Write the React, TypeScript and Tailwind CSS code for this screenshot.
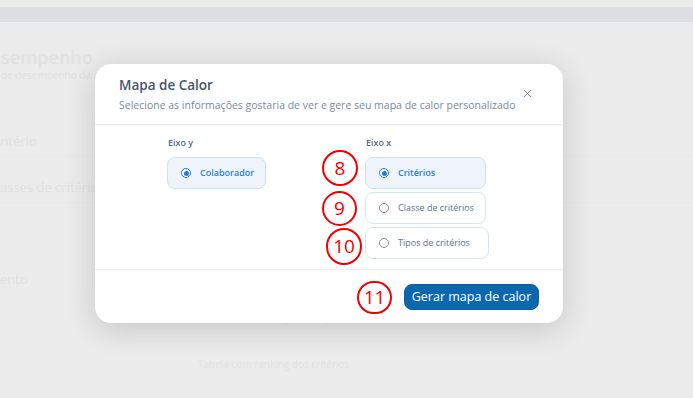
import { X } from "lucide-react"

const xOptions = [
  { id: "criterios", label: "Critérios", width: "w-[121px]" },
  { id: "classe", label: "Classe de critérios", width: "w-[121px]" },
  { id: "tipos", label: "Tipos de critérios", width: "w-[124px]" },
]

function Radio({ checked }: { checked: boolean }) {
  return checked ? (
    <span className="flex h-[10px] w-[10px] items-center justify-center rounded-full border-[1.5px] border-[#1f7ad1] bg-white">
      <span className="h-[5px] w-[5px] rounded-full bg-[#1f7ad1]" />
    </span>
  ) : (
    <span className="h-[10px] w-[10px] rounded-full border border-[#8c8f94] bg-white" />
  )
}

function Option({ label, checked, width }: { label: string; checked: boolean; width: string }) {
  return (
    <div
      className={`flex h-[32px] ${width} items-center gap-[9px] rounded-[8px] border pl-[13px] ${
        checked ? "border-[#cfe1f2] bg-[#eef4fa]" : "border-[#d6e5f3] bg-white"
      }`}
    >
      <Radio checked={checked} />
      <span
        className={`text-[9px] ${checked ? "font-semibold text-[#2b7fd1]" : "text-[#5e7290]"}`}
      >
        {label}
      </span>
    </div>
  )
}

function Marker({ n, className }: { n: string; className: string }) {
  return (
    <div
      className={`absolute flex items-center justify-center rounded-full border-[2.5px] border-[#f20000] bg-white text-[19px] leading-none text-[#f20000] ${className}`}
    >
      {n}
    </div>
  )
}

export default function App() {
  return (
    <div
      className="relative h-[398px] w-[693px] overflow-hidden bg-[#ebebeb]"
      style={{ fontFamily: '"Open Sans", "Noto Sans", sans-serif' }}
    >
      {/* page behind the overlay */}
      <div className="mt-[7px] h-[15px] bg-[#dcdee4]" />
      <div className="pl-[1px] pt-[24px] text-[#e2e2e2]">
        <div className="text-[18px] font-semibold leading-[22px]">sempenho</div>
        <div className="text-[10px] leading-[14px]">de desempenho da avaliação</div>
      </div>
      <div className="mt-[44px] text-[13px] text-[#e2e2e2]">
        <div className="h-[30px] leading-[30px]">ritério</div>
        <div className="h-px bg-[#e8e8e8]" />
        <div className="mt-[15px] h-[30px] leading-[30px]">asses de critérios</div>
        <div className="h-px bg-[#e8e8e8]" />
        <div className="mt-[61px] h-[30px] leading-[30px]">ento</div>
      </div>
      <div className="ml-[198px] mt-[16px] text-[10px] text-[#e3e3e3]">
        <div>Tabela com ranking por cargos</div>
        <div className="mt-[32px]">Tabela com ranking dos critérios</div>
      </div>

      {/* modal */}
      <div className="absolute left-[95px] top-[64px] w-[468px] rounded-[16px] bg-white shadow-[0_6px_30px_rgba(0,0,0,0.16)]">
        <div className="relative border-b border-[#e8ecf1] px-[24px] pb-[11px] pt-[11px]">
          <div className="text-[13.5px] font-semibold leading-[20px] text-[#4b5566]">Mapa de Calor</div>
          <div className="mt-[2px] text-[10.5px] leading-[16px] text-[#7c8aa0]">
            Selecione as informações gostaria de ver e gere seu mapa de calor personalizado
          </div>
          <X className="absolute right-[29px] top-[23px] h-[13px] w-[13px] text-[#707070]" strokeWidth={1.5} />
        </div>

        <div className="flex border-b border-[#eef0f3] pb-[10px] pt-[11px]">
          <div className="ml-[72px] w-[198px]">
            <div className="pl-[1px] text-[9px] font-semibold leading-[14px] text-[#5b6a7f]">Eixo y</div>
            <div className="mt-[7px]">
              <Option label="Colaborador" checked width="w-[99px]" />
            </div>
          </div>
          <div>
            <div className="pl-[1px] text-[9px] font-semibold leading-[14px] text-[#5b6a7f]">Eixo x</div>
            <div className="mt-[7px] flex flex-col gap-[3px]">
              {xOptions.map((o, i) => (
                <Option key={o.id} label={o.label} checked={i === 0} width={o.width} />
              ))}
            </div>
          </div>
        </div>

        <div className="flex justify-end px-[24px] pb-[13px] pt-[14px]">
          <button className="h-[26px] w-[135px] rounded-[8px] border border-[#0a5f9e] bg-[#0b68ae] text-[12.5px] text-white">
            Gerar mapa de calor
          </button>
        </div>
      </div>

      {/* annotations */}
      <Marker n="8" className="left-[322px] top-[150px] h-[36px] w-[36px]" />
      <Marker n="9" className="left-[322px] top-[191px] h-[35px] w-[35px]" />
      <Marker n="10" className="left-[326px] top-[228px] h-[37px] w-[36px]" />
      <Marker n="11" className="left-[357px] top-[281px] h-[33px] w-[35px]" />
    </div>
  )
}
